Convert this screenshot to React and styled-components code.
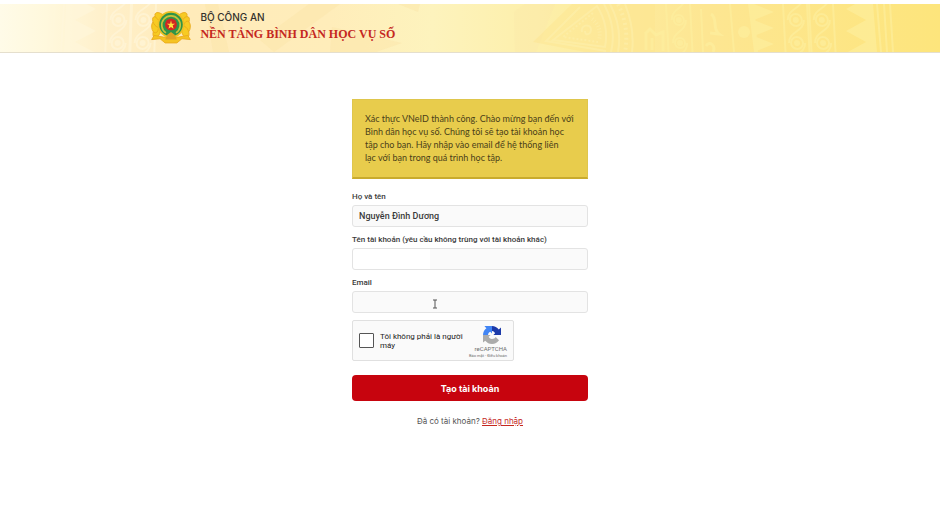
import React from 'react';
import styled, { createGlobalStyle } from 'styled-components';

const GlobalStyle = createGlobalStyle`
    *, *::before, *::after {
        box-sizing: border-box;
    }

    body {
        margin: 0;
        background: #ffffff;
        color: #3a3a3a;
        font-family: Inter, 'Liberation Sans', sans-serif;
    }
`;

const Header = styled.header`
    position: relative;
    height: 49px;
    margin-top: 4px;
    overflow: hidden;
    border-bottom: 1px solid #e5dfcd;
    background: linear-gradient(90deg, #fffbe8 0%, #fff8dc 5%, #ffefc8 12%, #ffebba 20%, #ffedba 35%, #fdf3bd 46%, #fdeea5 60%, #fde692 75%, #fde57c 100%);
`;

const Pattern = styled.svg`
    position: absolute;
    inset: 0;
    width: 100%;
    height: 100%;
`;

const Brand = styled.div`
    position: relative;
    display: flex;
    align-items: center;
    gap: 8px;
    height: 100%;
    margin-left: 16%;
    padding-bottom: 2px;
`;

const Emblem = styled.svg`
    width: 42px;
    height: 34px;
`;

const BrandText = styled.div`
    display: flex;
    flex-direction: column;
`;

const Ministry = styled.span`
    font-size: 10px;
    line-height: 15px;
    font-weight: 500;
    color: #33312c;
`;

const SiteName = styled.h1`
    margin: 0;
    font-family: 'Liberation Serif', serif;
    font-size: 12px;
    line-height: 19px;
    font-weight: 700;
    color: #c5281f;
`;

const Main = styled.main`
    width: 25%;
    min-width: 236px;
    margin: 46px auto 0;
`;

const Notice = styled.p`
    margin: 0 0 12px;
    padding: 12px 12px 13px;
    border: 1px solid #dfc64c;
    border-bottom: 2px solid #c9ab2d;
    background: #e8cc4c;
    color: #4a4019;
    font-family: Lato, 'Open Sans', sans-serif;
    font-size: 9px;
    line-height: 13px;
`;

const Form = styled.form`
    display: flex;
    flex-direction: column;
`;

const Field = styled.div`
    display: flex;
    flex-direction: column;
    gap: 2px;
    margin-bottom: 7px;
`;

const Label = styled.label`
    font-family: Roboto, sans-serif;
    font-size: 8px;
    line-height: 12px;
    font-weight: 500;
`;

const Input = styled.input`
    width: 100%;
    height: 22px;
    padding: 0 6px;
    border: 1px solid #e3e3e3;
    border-radius: 3px;
    outline: none;
    background: ${({$masked}) => $masked
        ? 'linear-gradient(90deg, #ffffff 33%, #fafafa 33%)'
        : '#fafafa'};
    color: #3a3a3a;
    font-family: Roboto, sans-serif;
    font-size: 9px;
    font-weight: 500;
`;

const EmailBox = styled.div`
    position: relative;
    display: flex;
`;

const Cursor = styled.svg`
    position: absolute;
    left: 80px;
    top: 8px;
    width: 6px;
    height: 10px;
`;

const Captcha = styled.div`
    display: flex;
    align-items: center;
    width: 162px;
    height: 41px;
    margin-bottom: 14px;
    padding: 0 6px;
    border: 1px solid #e0e0e0;
    border-radius: 2px;
    background: #fafafa;
    font-family: Roboto, sans-serif;
`;

const CaptchaBox = styled.input`
    appearance: none;
    flex: none;
    width: 15px;
    height: 15px;
    margin: 0 6px 0 0;
    border: 1px solid #555555;
    border-radius: 1px;
    background: #ffffff;
`;

const CaptchaLabel = styled.label`
    flex: 1;
    padding-right: 4px;
    font-size: 8px;
    line-height: 9px;
    color: #222222;
`;

const CaptchaBrand = styled.div`
    display: flex;
    flex: none;
    flex-direction: column;
    align-items: flex-end;
    padding-top: 2px;
    color: #6f6f6f;
    font-size: 6px;
    line-height: 8px;
`;

const CaptchaLogo = styled.svg`
    width: 18px;
    height: 18px;
    margin: 0 6px 1px 0;
`;

const CaptchaLinks = styled.div`
    font-size: 4px;
    line-height: 5px;
    white-space: nowrap;
`;

const CaptchaLink = styled.a`
    color: inherit;
    text-decoration: none;
`;

const SubmitButton = styled.button`
    height: 26px;
    padding: 0;
    border: 0;
    border-radius: 4px;
    background: #c7040e;
    color: #ffffff;
    font-family: inherit;
    font-size: 9px;
    font-weight: 700;
`;

const LoginHint = styled.p`
    margin: 14px 0 0;
    text-align: center;
    font-size: 8px;
    line-height: 12px;
    color: #555555;
`;

const LoginLink = styled.a`
    color: #c5281f;
    text-decoration: underline;
`;

const teeth = (x, tip, step, tops) => tops
    .map((y) => `M${x} ${y}L${tip} ${y + step / 2}L${x} ${y + step}Z`)
    .join('');

const Chain = ({x, skew = 0, r = 6}) => (
    <g fill='none' strokeWidth='2' transform={`skewX(${skew})`}>
        <path d={`M${x - 12} -2V50M${x + 12} -2V50`} />
        {[-7, 16, 39].map((y) => (
            <g key={y}>
                <circle cx={x} cy={y} r={r} />
                <circle cx={x} cy={y} r='3' fill='currentColor' stroke='none' />
                <path d={`M${x + r + 2} ${y}C${x + r + 2} ${y + 12} ${x - r - 2} ${y + 11} ${x - r - 2} ${y + 23}`} />
            </g>
        ))}
    </g>
);

const DrumPattern = () => (
    <Pattern viewBox='0 0 940 48' preserveAspectRatio='xMidYMid slice' aria-hidden='true'>
        <g color='#fff7dc' stroke='#fff7dc' opacity='0.6'>
            <path d='M51 0L48 48M55 0L52 48M64 0L61 48' strokeWidth='2' />
            <path d={`M66 0H75V48H64Z${teeth(75, 96, 22, [-6, 16, 38])}`} fill='#fff7dc' stroke='none' />
            <Chain x={119} skew={-2} />
            <Chain x={144} skew={-2} />
        </g>
        <g fill='#fbe6a9' opacity='0.5'>
            <path d='M205 0L218 0L229 48L213 48ZM260 36L309 0H340L274 48ZM332 23L402 39L376 48H330ZM398 0H420L418 8Z' />
            <path d='M514 8L525 0H555L536 48H515Z' opacity='0.5' />
        </g>

        <path d='M572 0L533 38L585 48H655V0Z' fill='#fde48e' opacity='0.45' />
        <g fill='none' stroke='#fdf0ac' opacity='0.6'>
            <path d='M580 3L546 37L606 47' strokeWidth='2' />
            <path d='M597 2L553 36L605 43C608 28 604 13 597 2Z' strokeWidth='2' />
            <path d='M593 9L563 33L598 38' strokeWidth='2' strokeDasharray='2 2' />
            <path d='M592 15C599 20 601 28 599 36' strokeWidth='4' strokeDasharray='1 2' />
            <path d='M582 28C580 21 590 19 591 25C591 31 585 32 585 27' strokeWidth='2' />
            <path d='M604 0C612 15 615 32 611 48M610 0C618 15 621 32 618 48M625 0C631 15 634 32 632 48' strokeWidth='2' />
            <path d='M618 0C626 16 628 32 625 48' strokeWidth='4' strokeDasharray='2 3' />
        </g>
        <g fill='none' stroke='#fdf0a0' color='#fdf0a0' opacity='0.6'>
            <path d='M645 30L650 25L656 31L663 28V47M646 30V46M652 34V46' strokeWidth='3' />
            <Chain x={678} skew={3} r={5} />
            <path d='M701 5L703 48M730 0L734 48' strokeWidth='2' />
            <path d='M711 10C718 14 712 25 719 30L710 29M706 42C710 36 716 42 713 48' strokeWidth='3' />
            <circle cx='744' cy='28' r='6' fill='currentColor' stroke='none' />
            <path d={`M748 0H754L758 48H754Z${teeth(754, 774, 16, [0, 16, 32])}`} fill='currentColor' stroke='none' />
            <Chain x={795} skew={3} />
            <Chain x={821} skew={3} />
            <path d={`M866 0H873L877 48H866Z${teeth(866, 846, 22, [-6, 16, 38])}`} fill='currentColor' stroke='none' />
            <path d='M877 0L881 48M884 0L887 48M890 0L893 48' strokeWidth='2' />
        </g>
    </Pattern>
);

const leaves = [[8, 26, 110], [6, 20, 85], [8, 14, 60], [12, 8, 35], [38, 8, 145], [42, 14, 120], [44, 20, 95], [42, 26, 70]];

const Logo = () => (
    <Emblem viewBox='0 0 50 40' role='img' aria-label='Bộ Công an'>
        {leaves.map(([x, y, turn]) => (
            <ellipse key={`${x}-${y}`} cx={x} cy={y} rx='7' ry='4' fill='#f7cb23' stroke='#e9aa1c' transform={`rotate(${turn} ${x} ${y})`} />
        ))}
        <path d='M5 30L2 35L12 34L18 39H32L38 34L48 35L45 30L34 32H16Z' fill='#f5c322' stroke='#e9a81c' />
        <circle cx='25' cy='17' r='16' fill='#efc024' />
        <circle cx='25' cy='17' r='14' fill='#2f9448' />
        <path d='M19 27A11 11 0 1 1 31 27' fill='none' stroke='#c9c23a' strokeWidth='2' />
        <circle cx='25' cy='17' r='7' fill='#d32522' />
        <path d='M25 12L26 16H30L27 18L28 22L25 20L22 22L23 18L20 16H24Z' fill='#ffe33d' />
        <path d='M21 29L25 26L29 29L32 35H18Z' fill='#e0a325' />
    </Emblem>
);

const RecaptchaMark = () => (
    <CaptchaLogo viewBox='0 0 64 64' aria-hidden='true'>
        <path fill='#1c3aa9' d='M64 32V5L56 12C50 5 42 0 32 0V18C38 18 41 22 43 26L37 32Z' />
        <path fill='#4285f4' d='M32 0H5L12 8C5 13 0 22 0 32H18C18 26 21 22 26 20L32 27Z' />
        <path fill='#ababab' d='M0 32V59L8 52C14 59 22 64 32 64C43 64 51 59 57 51L45 39C42 44 38 46 32 46C26 46 22 42 20 38L27 32Z' />
    </CaptchaLogo>
);

const App = () => (
    <>
        <GlobalStyle />
        <Header>
            <DrumPattern />
            <Brand>
                <Logo />
                <BrandText>
                    <Ministry>BỘ CÔNG AN</Ministry>
                    <SiteName>NỀN TẢNG BÌNH DÂN HỌC VỤ SỐ</SiteName>
                </BrandText>
            </Brand>
        </Header>
        <Main>
            <Notice>
                Xác thực VNeID thành công. Chào mừng bạn đến với Bình dân học vụ số. Chúng tôi sẽ tạo tài khoản học tập cho bạn. Hãy nhập vào email để hệ thống liên lạc&nbsp;với bạn trong quá trình học tập.
            </Notice>
            <Form onSubmit={(e) => e.preventDefault()}>
                <Field>
                    <Label htmlFor='fullname'>Họ và tên</Label>
                    <Input id='fullname' defaultValue='Nguyễn Đình Dương' />
                </Field>
                <Field>
                    <Label htmlFor='username'>Tên tài khoản (yêu cầu không trùng với tài khoản khác)</Label>
                    <Input id='username' $masked />
                </Field>
                <Field>
                    <Label htmlFor='email'>Email</Label>
                    <EmailBox>
                        <Input id='email' type='email' />
                        <Cursor viewBox='0 0 6 10' aria-hidden='true'>
                            <path d='M1 1H5M3 1V9M1 9H5' fill='none' stroke='#555555' />
                        </Cursor>
                    </EmailBox>
                </Field>
                <Captcha>
                    <CaptchaBox id='captcha' type='checkbox' />
                    <CaptchaLabel htmlFor='captcha'>Tôi không phải là người máy</CaptchaLabel>
                    <CaptchaBrand>
                        <RecaptchaMark />
                        reCAPTCHA
                        <CaptchaLinks>
                            <CaptchaLink href='#privacy'>Bảo mật</CaptchaLink> - <CaptchaLink href='#terms'>Điều khoản</CaptchaLink>
                        </CaptchaLinks>
                    </CaptchaBrand>
                </Captcha>
                <SubmitButton type='submit'>Tạo tài khoản</SubmitButton>
            </Form>
            <LoginHint>
                Đã có tài khoản? <LoginLink href='#login'>Đăng nhập</LoginLink>
            </LoginHint>
        </Main>
    </>
);

export default App;
